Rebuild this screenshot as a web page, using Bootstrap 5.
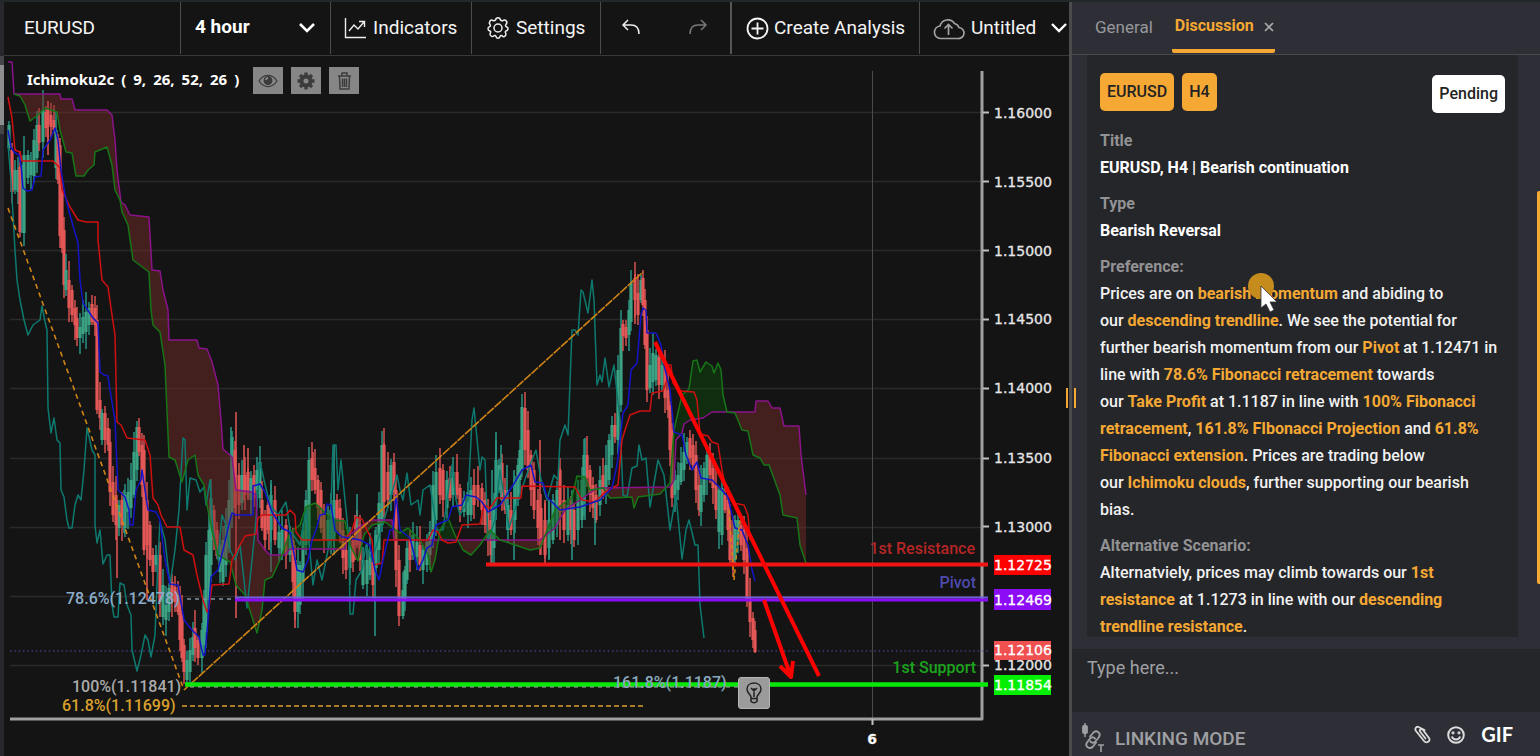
<!DOCTYPE html>
<html lang="en" data-bs-theme="dark">
<head>
<meta charset="utf-8">
<meta name="viewport" content="width=device-width, initial-scale=1">
<title>EURUSD chart</title>
<link href="https://cdn.jsdelivr.net/npm/bootstrap@5.3.0/dist/css/bootstrap.min.css" rel="stylesheet">
<style>
  :root { --ink:#141414; --pane:#2e2f36; --well:#25262a; --gold:#f5a833; }
  body { font-family: Roboto, sans-serif; background: var(--ink); color:#f2f2f2; }
  .app { height: 100vh; border-top: 2px solid #222729; }
  .rail { flex: 0 0 4px; background:#27272d; padding-top: 54px; }
  .rail-thumb { height: 78px; background:#8d8e90; border-top: 9px solid #45464a; border-bottom: 9px solid #45464a; }
  .workspace { background: var(--ink); }
  .toolbar { height: 54px; border-bottom: 1px solid #383838; font-size: 19px; font-weight: 500; }
  .tool { background: none; border: 0; border-right: 1px solid #4c4c4c; color:#f4f4f4; padding: 0; line-height: 24px; white-space: nowrap; display: flex; align-items: center; height: 52px; flex-shrink: 0; }
  .tool svg { flex: none; }
  .t-pair { width: 177px; padding-left: 20px; font-weight: 400; }
  .t-pair input { width: 100%; border: 0; background: none; color: inherit; padding: 0; outline: 0; }
  .t-frame { width: 150px; position: relative; }
  .t-frame select { appearance: none; border: 0; background: none; color: #fff; font-weight: 700; width: 100%; height: 100%; padding: 0 14px 2px; outline: 0; }
  .t-frame svg { position: absolute; right: 14px; pointer-events: none; }
  .t-ind { width: 141px; padding-left: 13px; gap: 6px; }
  .t-set { width: 129px; padding-left: 14px; gap: 6px; }
  .t-undo { width: 65px; border-right: 0; padding-left: 20px; }
  .t-redo { width: 66px; border-right: 2px solid #555; padding-left: 22px; }
  .t-new { width: 188px; padding-left: 14px; gap: 5px; }
  .t-file { padding-left: 12px; gap: 6px; border-right: 0; flex: 1 1 0; }
  .chart-wrap { min-height: 0; }
  .plot { width: 100%; height: 100%; }
  .legend-row { top: 11px; left: 23px; gap: 8px; }
  .legend-name { font: 700 15px "Noto Sans", sans-serif; color:#fff; margin-right: 6px; padding-bottom: 4px; gap: 7px; }
  .chip { width: 30px; height: 27px; padding: 0; border: 0; background:#868686; color:#3c3c3c; display:grid; place-items:center; }
  .idea-btn { left: 68.9%; top: 88.7%; width: 32px; height: 32px; padding: 0; border: 1px solid #b5b5b5; border-radius: 3px; background:#9b9b9b; display:grid; place-items:center; }
  .axis-text { font: 14px "DejaVu Sans", sans-serif; }
  .plot-text { font: 500 16px Roboto, sans-serif; }
  .splitter { flex: 0 0 3px; background:#4b4b4e; }
  .grip { left: -3px; top: 386px; width: 10px; height: 20px; border: solid var(--gold); border-width: 0 2px; }
  .side { flex: 0 0 468px; background: var(--pane); }
  .tabs { height: 54px; border-bottom: 1px solid #47494d; padding-left: 23px; font-size: 17px; }
  .tab-plain { color:#97989b; padding: 13px 0 0; line-height: 24px; }
  .tab-on { color: var(--gold); font-size: 16px; font-weight: 700; margin-left: 19px; padding: 11px 1px 0 3px; line-height: 26px; width: 103px; border-bottom: 4px solid var(--gold); border-radius: 2px; height: 51px; background: none; }
  .tab-on, .tab-plain { border-top: 0; border-left: 0; border-right: 0; }
  .tab-plain { background: none; border-bottom: 0; }
  .feed { min-height: 0; margin-bottom: 12px; padding: 0 22px 0 15px; }
  .post { height: 100%; overflow: hidden; background: var(--well); padding: 18px 13px 0; font-size: 16px; line-height: 27px; font-weight: 500; }
  .tags { margin-bottom: 14px; }
  .tag { height: 38px; line-height: 37px; padding: 0 7px; border-radius: 5px; background: var(--gold); color:#232323; font-weight: 500; }
  .tag-state { background:#fff; margin-top: 2px; }
  .post h2 { font-size: 16px; line-height: 27px; font-weight: 700; color:#929294; margin: 0; }
  .post p { margin: 0 0 9px; }
  .post b { color: var(--gold); font-weight: 700; }
  .feed-thumb { right: 0; top: 136px; width: 3px; height: 393px; background: var(--gold); border-radius: 2px 0 0 2px; }
  .pointer { left: 175px; top: 216px; pointer-events: none; }
  .compose { height: 64px; border: 0; resize: none; background: var(--well); color:#eee; padding: 6px 15px; font-size: 18px; line-height: 26px; outline: 0; display: block; }
  .compose::placeholder { color:#9fa0a3; opacity: 1; }
  .foot { height: 44px; padding: 0 27px 0 9px; }
  .foot button { background: none; border: 0; padding: 0; color:#dcdcdc; }
  .foot .link-mode { color:#9fa0a3; font-size: 19px; font-weight: 500; gap: 10px; padding-top: 10px; }
  .foot .gif { font: 700 20px Lato, sans-serif; color: #fff; }
</style>
</head>
<body>
<div class="app d-flex overflow-hidden">
  <div class="rail"><div class="rail-thumb"></div></div>

  <main class="workspace d-flex flex-column flex-grow-1 overflow-hidden">
    <div class="toolbar d-flex">
      <div class="tool t-pair"><input type="text" value="EURUSD" aria-label="Symbol"></div>
      <div class="tool t-frame">
        <select aria-label="Timeframe"><option>4 hour</option></select>
        <svg width="18" height="12" viewBox="0 0 18 12" fill="none" stroke="#fff" stroke-width="2.6"><path d="M2 2l7 7 7-7"/></svg>
      </div>
      <button class="tool t-ind" type="button">
        <svg width="23" height="22" viewBox="0 0 23 22" fill="none" stroke="#eee" stroke-width="1.4"><path d="M1.5 1v19.5H22M5 14l5-6 4 4 6-7M15 4.500h5.500V10"/></svg>Indicators</button>
      <button class="tool t-set" type="button">
        <svg width="24" height="24" viewBox="0 0 24 24" fill="none" stroke="#eee" stroke-width="1.500" stroke-linejoin="round"><circle cx="12" cy="12" r="4"/><path d="M9.500 4Q10 1.800 12 1.800T14.500 4Q15.500 5.300 17 4.500 19 3.500 20.300 5T20 8.500Q18.800 10 20.500 10.800 22.300 11.500 22 13.200T20 15Q18.700 15.700 19.800 17.300 20.500 19 19 20.200T16 19.700Q14.700 18.800 14 20.500 13.500 22.300 12 22.300T10 20.500Q9.300 18.800 8 19.700 6.500 21 5 20T4.200 17Q5.300 15.700 4 15 2 14.500 2 12.800T3.500 10.800Q5.200 10 4 8.500 2.800 6.500 4 5T7 4.500Q8.500 5.300 9.500 4z"/></svg>Settings</button>
      <button class="tool t-undo" type="button" aria-label="Undo"><svg width="20" height="18" viewBox="0 0 20 18" fill="none" stroke="#eee" stroke-width="1.500"><path d="M7 1L2 6l5 5M2 6h8c5 0 8 3 8 9"/></svg></button>
      <button class="tool t-redo" type="button" aria-label="Redo"><svg width="20" height="18" viewBox="0 0 20 18" fill="none" stroke="#777" stroke-width="1.500"><path d="M13 1l5 5-5 5M18 6h-8c-5 0-8 3-8 9"/></svg></button>
      <button class="tool t-new" type="button">
        <svg width="23" height="23" viewBox="0 0 23 23" fill="none" stroke="#f4f4f4" stroke-width="1.800"><circle cx="11.500" cy="11.500" r="10"/><path d="M11.500 5.500v12M5.500 11.500h12"/></svg>Create Analysis</button>
      <button class="tool t-file" type="button">
        <svg width="33" height="23" viewBox="0 0 33 23" fill="none" stroke="#a2a2a2" stroke-width="1.700"><path d="M8 21.500h18a5.500 5.500 0 0 0 1-11 6.500 6.500 0 0 0-4.500-4A8 8 0 0 0 8 9a6.300 6.300 0 0 0 0 12.500zM16.500 18V7.500M12.500 11.500l4-4 4 4"/></svg>Untitled
        <svg class="ms-2" width="18" height="12" viewBox="0 0 18 12" fill="none" stroke="#fff" stroke-width="2.400"><path d="M2 2l7 7 7-7"/></svg></button>
    </div>

    <div class="chart-wrap position-relative flex-grow-1">
      <svg class="plot d-block" viewBox="4 56 1065 700" preserveAspectRatio="xMinYMin meet" role="img" aria-label="EURUSD 4 hour candles">
        <g stroke="#2a2a2a" stroke-width="1.500"><path d="M10 112.500H982M10 181.500H982M10 250.500H982M10 319.500H982M10 388.500H982M10 458.500H982M10 527.500H982M10 596.500H982M10 665.500H982"/></g>
        <path d="M872.500 71V718" stroke="#4a4a4a"/>
        <path d="M982 71V719H10" fill="none" stroke="#a0a0a0" stroke-width="3" stroke-linejoin="round"/>
        <path d="M872.500 719v6M983 112.500h6M983 181.500h6M983 250.500h6M983 319.500h6M983 388.500h6M983 458.500h6M983 526.500h6M983 665.500h6" stroke="#c0c0c0" stroke-width="2"/>
        <path d="M10 651H988" stroke="#5450b4" stroke-dasharray="1.500 2.800"/>
        <g id="candles"></g>
        <g id="clouds"></g>
        <g id="studies" fill="none" stroke-width="1.500" stroke-linejoin="round"></g>
        <g fill="none" stroke="#cf8415" stroke-width="1.600">
          <path d="M8 208L184 690" stroke-dasharray="5 4"/><path d="M184 690L643 272" stroke-dasharray="9 1"/>
          <path d="M729 510l5 70 6-62" stroke-dasharray="4 3"/>
        </g>
        <path d="M182 706H643" stroke="#d9a02c" stroke-width="1.500" stroke-dasharray="5 3"/>
        <path d="M187 599H240" stroke="#7f92a0" stroke-width="1.500" stroke-dasharray="4 4"/>
        <path d="M486 564.500H988" stroke="#f01414" stroke-width="4"/>
        <path d="M235 597.500H988" stroke="#6c62dc" stroke-width="2"/><path d="M235 600H988" stroke="#8c0cf5" stroke-width="3"/>
        <path d="M185 684.500H988" stroke="#0ae80a" stroke-width="4.500"/>
        <path d="M190 687H740" stroke="#a0b8a0" stroke-width="1" stroke-dasharray="4 4"/>
        <path d="M655 342L819 676" stroke="#fd0000" stroke-width="4"/>
        <path d="M764 600L791 677M780 666l11 11 2-16" fill="none" stroke="#fd0000" stroke-width="4" stroke-linejoin="round"/>
        <g class="plot-text">
          <text x="66" y="604" fill="#8badc8">78.6%(1.12478)</text>
          <text x="72" y="692" fill="#ababab">100%(1.11841)</text>
          <text x="62" y="711" fill="#d9a02c">61.8%(1.11699)</text>
          <text x="613" y="688" fill="#8aa9bd">161.8%(1.1187)</text>
          <text x="975" y="554" fill="#b62626" text-anchor="end">1st Resistance</text>
          <text x="976" y="588" fill="#4e4aad" text-anchor="end">Pivot</text>
          <text x="976" y="673" fill="#1ca31c" text-anchor="end">1st Support</text>
        </g>
        <g class="axis-text" fill="#e6e6e6" stroke="#e6e6e6" stroke-width=".3">
          <text x="994" y="118">1.16000</text><text x="994" y="187">1.15500</text><text x="994" y="256">1.15000</text>
          <text x="994" y="324">1.14500</text><text x="994" y="393">1.14000</text><text x="994" y="463">1.13500</text>
          <text x="994" y="532">1.13000</text><text x="994" y="670">1.12000</text>
          <text x="872" y="744" text-anchor="middle" font-weight="700" fill="#fff">6</text>
        </g>
        <path d="M994 555h57v20h-57z" fill="#fd0000"/><path d="M994 589h57v21h-57z" fill="#8c0cf5"/>
        <path d="M994 641h57v19h-57z" fill="#f05050"/><path d="M994 675h57v20h-57z" fill="#04ef04"/>
        <g class="axis-text" fill="#fff" stroke="#fff" stroke-width=".3"><text x="994" y="570">1.12725</text><text x="994" y="605">1.12469</text><text x="994" y="655">1.12106</text><text x="994" y="690">1.11854</text></g>
      </svg>

      <div class="legend-row position-absolute d-flex align-items-center">
        <div class="legend-name d-flex"><span>Ichimoku2c</span> <span>(</span> <span>9,</span> <span>26,</span> <span>52,</span> <span>26</span> <span>)</span></div>
        <button class="chip" type="button" aria-label="Show or hide"><svg width="20" height="14" viewBox="0 0 20 14" fill="none" stroke="currentColor" stroke-width="1.300"><path d="M1 7c5-7.500 13-7.500 18 0-5 7.500-13 7.500-18 0z"/><circle cx="10" cy="6.500" r="3.800" fill="currentColor"/><path d="M8 6q0-2 2-2" stroke="#999"/></svg></button>
        <button class="chip" type="button" aria-label="Indicator settings"><svg width="18" height="18" viewBox="-9 -9 18 18"><g fill="none" stroke="currentColor"><circle r="4.500" stroke-width="4"/><path d="M0-8.500v3M0 8.500v-3M-8.500 0h3M8.500 0h-3M-6-6l2 2M6 6l-2-2M-6 6l2-2M6-6l-2 2" stroke-width="3.400"/></g></svg></button>
        <button class="chip" type="button" aria-label="Remove indicator"><svg width="15" height="18" viewBox="0 0 15 18" fill="none" stroke="currentColor" stroke-width="1.500"><path d="M1 4h13M5 3.500V1h5v2.500M2.500 4l.5 13h9l.5-13M5.500 6.500v8.500M7.500 6.500v8.500M9.500 6.500v8.500"/></svg></button>
      </div>
      <button class="idea-btn position-absolute" type="button" aria-label="Idea"><svg width="18" height="22" viewBox="0 0 18 22" fill="none" stroke="#222" stroke-width="1.500"><path d="M6 15c0-2-4-3.500-4-8 0-8 14-8 14 0 0 4.500-4 6-4 8v4.500q-3 2.500-6 0zM6 16.500h6M9 15V6M6 6l3 3 3-3"/></svg></button>
    </div>
  </main>

  <div class="splitter position-relative"><div class="grip position-absolute z-1"></div></div>

  <aside class="side d-flex flex-column">
    <div class="tabs d-flex" role="tablist">
      <button class="tab-plain align-self-start" role="tab" type="button">General</button>
      <button class="tab-on text-start d-flex" role="tab" type="button" aria-selected="true">Discussion
        <svg class="ms-auto mt-2" width="10" height="12" viewBox="0 0 10 12" stroke="#a9a9a9" stroke-width="1.700"><path d="M1 2l8 8M9 2l-8 8"/></svg></button>
    </div>
    <div class="feed flex-grow-1 position-relative">
      <article class="post">
        <div class="tags d-flex align-items-start gap-2">
          <span class="tag">EURUSD</span><span class="tag">H4</span><span class="tag tag-state ms-auto">Pending</span>
        </div>
        <h2>Title</h2>
        <p class="fw-bold text-white">EURUSD, H4 | Bearish continuation</p>
        <h2>Type</h2>
        <p class="fw-bold text-white">Bearish Reversal</p>
        <h2>Preference:</h2>
        <p>Prices are on <b>bearish momentum</b> and abiding to our&nbsp;<b>descending trendline</b>. We see the potential for further bearish momentum from our <b>Pivot</b> at 1.12471 in line with <b>78.6% Fibonacci retracement</b> towards our&nbsp;<b>Take&nbsp;Profit</b> at 1.1187 in line with <b>100% Fibonacci retracement</b>, <b>161.8% FIbonacci Projection</b> and <b>61.8% Fibonacci extension</b>. Prices are trading below our&nbsp;<b>Ichimoku clouds</b>, further supporting our bearish bias.</p>
        <h2>Alternative Scenario:</h2>
        <p>Alternatviely, prices may climb towards our <b>1st resistance</b> at 1.1273 in line with our <b>descending trendline resistance</b>.</p>
      </article>
      <div class="feed-thumb position-absolute"></div>
      <svg class="pointer position-absolute" width="32" height="44" viewBox="0 0 32 44"><circle cx="14" cy="15" r="13" fill="#c58c1d"/><path d="M14 15v22l5-4 4 8 4-2-4-8h7z" fill="#fff" stroke="#333" stroke-width=".800"/></svg>
    </div>
    <textarea class="compose w-100" placeholder="Type here..." aria-label="Message"></textarea>
    <div class="foot d-flex align-items-center">
      <button class="link-mode d-flex align-items-center" type="button">
        <svg class="mb-1" width="24" height="30" viewBox="0 0 24 30" fill="none" stroke="currentColor" stroke-width="1.800"><path d="M4 1v14" stroke-width="1.500"/><rect x="2" y="4" width="4" height="7" rx="1" fill="currentColor"/><path d="M8.500 15l4-4.500c3-3 8 .5 5.500 4.500l-3.500 4.500c-2 2-5 1.500-5.500-1"/><path d="M15.500 20l-3.500 4.500c-3.500 3.500-8.500 0-6-4l3-4c2-2 5-1.500 5.500 1"/><path d="M17 23h6M20 23v7" stroke-width="1.600"/></svg>
        LINKING MODE</button>
      <div class="ms-auto d-flex align-items-center gap-3">
        <button type="button" aria-label="Attach"><svg width="17" height="19" viewBox="0 0 17 19" fill="none" stroke="currentColor" stroke-width="1.800" stroke-linecap="round"><path d="M10.500 5L4.500 2C2 1 .5 4 2 6l8 10c2.500 3 7 0 5-3L9 5C7.500 3 5 5 6 6.500l5.500 7"/></svg></button>
        <button type="button" aria-label="Emoji"><svg width="18" height="18" viewBox="0 0 18 18" fill="none" stroke="currentColor" stroke-width="2"><circle cx="9" cy="9" r="7.800"/><path d="M4.800 10.500c1.500 4 7 4 8.400 0"/><circle cx="6" cy="6.800" r=".600"/><circle cx="12" cy="6.800" r=".600"/></svg></button>
        <button class="gif" type="button">GIF</button>
      </div>
    </div>
  </aside>
</div>
<script src="https://cdn.jsdelivr.net/npm/bootstrap@5.3.0/dist/js/bootstrap.bundle.min.js"></script>
<script>
const NS = 'http://www.w3.org/2000/svg';
function path(parent, d, attrs) {
  const p = document.createElementNS(NS, 'path');
  p.setAttribute('d', d);
  for (const k in attrs) p.setAttribute(k, attrs[k]);
  document.getElementById(parent).appendChild(p);
}
// candle bodies: x, top, bottom, u(p) / d(own)
const bars = `9 125 148 u,12 150 192 d,15 170 190 u,18 170 192 u,20 167 232 d,24 155 233 u,28 155 178 u,31 160 175 u,34 140 176 u,37 125 158 u,39 125 143 d,43 110 142 u,46 112 128 d,48 110 125 d,51 115 127 d,54 120 130 d,56 130 168 u,58 138 180 d,60 145 236 d,62 190 248 d,64 230 285 d,66 270 290 u,69 280 308 d,72 290 315 d,75 308 325 d,77 318 338 d,80 327 338 u,83 317 334 u,86 312 332 u,89 308 325 u,92 304 322 d,95 308 325 d,97 320 410 d,100 400 418 d,102 413 440 u,105 413 440 d,108 428 445 d,110 442 492 d,113 482 515 d,116 495 525 d,119 505 528 u,122 500 525 d,125 495 528 u,128 492 512 u,131 480 508 u,134 452 495 u,137 427 470 u,139 427 452 d,142 445 485 d,144 450 550 d,147 500 545 d,150 525 560 d,153 555 572 d,156 555 565 u,160 555 602 d,163 585 617 u,166 605 620 u,169 588 612 u,172 582 600 d,175 587 602 d,178 595 612 d,180 603 640 d,182 615 658 d,184 645 672 d,187 660 680 u,190 650 672 u,193 637 655 u,195 628 648 d,198 640 658 d,202 630 658 u,204 600 645 u,206 555 632 u,209 530 600 u,211 498 565 u,214 510 540 d,217 530 556 d,220 545 572 u,223 540 582 u,226 525 565 u,229 500 548 u,232 437 515 u,235 450 508 d,239 475 505 d,242 475 503 u,245 475 495 d,248 472 490 d,251 478 500 u,254 475 498 d,257 470 490 u,260 462 498 u,262 500 528 d,265 515 540 d,268 505 530 d,271 495 530 u,275 500 540 d,279 532 548 u,282 530 554 u,286 525 555 d,290 535 555 u,293 540 582 d,295 560 612 d,298 565 612 u,300 565 605 u,303 530 582 u,306 500 545 u,309 460 540 u,312 458 480 d,315 468 490 d,318 480 508 d,321 490 528 d,324 515 540 d,328 520 541 u,331 510 540 u,334 500 540 u,337 500 518 d,340 508 535 d,343 530 558 d,346 550 570 d,350 545 568 u,353 540 562 d,357 517 545 d,360 525 560 d,363 560 585 u,367 560 584 u,370 552 575 u,373 562 585 d,376 535 568 u,379 503 550 u,382 445 525 u,384 445 502 d,388 472 500 d,391 465 495 u,394 462 492 d,396 490 570 d,399 560 616 d,403 590 616 u,405 570 600 u,407 548 580 u,410 540 560 d,413 535 555 u,417 542 557 u,420 545 565 d,423 550 570 u,427 542 565 u,430 532 555 u,433 485 540 u,436 472 520 u,440 468 495 d,443 470 500 d,447 480 508 u,450 478 498 d,453 472 495 u,457 472 495 d,460 488 510 d,464 498 512 u,468 492 515 u,471 490 515 u,474 485 505 d,478 485 500 d,482 488 510 d,485 500 525 d,488 510 540 d,491 520 555 d,494 510 548 u,496 460 500 u,499 465 490 u,502 463 500 d,505 490 510 d,508 505 530 u,511 510 530 d,515 480 520 u,518 465 500 u,520 450 480 u,522 407 470 u,525 408 450 d,528 430 470 d,531 455 490 d,534 470 510 d,538 500 528 d,541 508 545 d,545 520 555 d,549 520 548 u,553 500 540 u,557 490 525 u,560 470 512 d,564 500 530 d,568 505 535 u,571 500 530 d,574 510 540 d,578 490 530 u,582 480 520 u,584 455 500 u,587 455 478 d,590 470 495 d,593 485 508 d,596 495 520 d,600 480 505 u,603 475 495 d,606 465 492 u,609 440 480 u,612 425 455 u,615 425 437 d,618 370 440 u,621 328 405 u,623 324 336 d,626 327 338 d,629 310 335 u,631 283 322 u,635 278 300 d,638 293 315 d,641 280 300 u,643 278 305 d,645 300 345 d,647 330 390 d,650 365 388 u,653 353 382 u,656 355 380 u,659 357 385 d,662 365 385 u,665 365 398 d,668 390 410 d,670 405 450 d,672 430 498 d,675 480 495 u,678 475 490 u,681 463 482 u,684 452 470 u,687 442 460 u,690 438 458 d,693 445 465 d,696 455 490 d,699 485 510 d,701 485 512 u,704 468 495 u,707 455 480 u,710 455 475 d,713 468 488 d,716 485 510 d,719 490 532 u,722 488 535 u,725 495 510 d,728 500 530 d,730 520 560 d,733 535 565 d,735 520 560 u,738 520 540 u,741 525 545 d,744 530 560 d,747 548 600 d,750 598 622 d,753 618 640 d,755 630 652 d`
  .split(',').map(s => s.split(' '));
const tint = { u: '#3ba284', d: '#e35757' };
bars.forEach(([x, t, b, k], i) => {
  x = +x; t = +t; b = +b;
  const up = 4 + (i * 37 % 17), down = 3 + (i * 53 % 15);
  const wick = k === 'u' ? '#2a9b8a' : '#e35757';
  path('candles', `M${x} ${t - up}V${b + (i === bars.length - 1 ? 0 : down)}`, { stroke: wick, 'stroke-width': 1.4 });
  path('candles', `M${x} ${t}V${b}`, { stroke: tint[k], 'stroke-width': 3.2 });
});
// long single wicks
path('candles', 'M48 101V155M117 500V578M147 540V600M236 412V618M244 445V500M248 448V500M269 500V550M295 570V628M313 452V480M355 515V560M384 443V470M540 440V555M545 500V563M560 468V540M635 274V324M755 630V653', { stroke: '#e35757', 'stroke-width': 1.5 });
path('candles', 'M22 165V233M124 490V533M231 427V500M271 480V572M334 445V555M375 530V636M357 494V540M492 470V564M496 432V520M501 445V500M507 465V530M514 470V560M549 500V560M572 490V560M585 438V520M595 500V545', { stroke: '#2a9b8a', 'stroke-width': 1.5 });

const spanA = '14,94 20,96 25,105 30,121 38,115 45,108 57,112 60,130 66,152 72,153 76,176 84,176 88,170 94,165 95,152 107,147 112,165 115,190 120,200 122,212 128,225 133,260 149,272 151,310 153,325 160,332 165,365 169,457 175,460 182,482 188,460 195,455 198,475 204,485 207,505 213,535 218,555 230,562 236,585 245,595 257,633 262,610 265,580 272,577 280,560 290,532 300,525 306,507 315,503 328,515 335,520 345,521 350,545 358,561 364,535 372,525 385,522 400,533 408,528 420,540 428,555 431,572 435,560 440,530 448,518 455,535 463,550 471,555 480,545 490,530 500,540 515,545 530,550 540,548 555,510 572,497 577,476 585,477 590,490 603,488 610,498 632,497 634,508 638,497 660,494 670,483 674,430 682,395 689,389 693,361 697,360 700,372 706,362 712,366 714,373 718,363 721,370 723,395 727,412 735,413 742,430 748,431 753,455 760,458 764,465 769,465 780,495 783,515 797,518 800,545 806,563';
const spanB = '8,62 12,62 14,94 60,94 61,99 72,99 75,110 107,110 112,115 115,140 117,170 121,202 125,205 130,215 149,217 152,270 160,271 163,290 168,310 169,340 197,340 199,348 207,349 212,362 218,385 221,420 223,449 232,457 236,490 252,492 256,495 258,540 265,550 270,555 285,555 290,549 345,549 347,537 362,525 372,520 392,520 394,540 540,540 555,528 565,510 580,500 597,488 670,487 674,480 676,440 682,433 684,424 690,420 703,418 712,412 755,412 756,401 768,401 772,408 780,408 784,426 799,426 801,455 806,495';
const parse = s => s.split(' ').map(p => p.split(',').map(Number));
function at(pts, x) {
  for (let i = 1; i < pts.length; i++) if (x <= pts[i][0]) {
    const [a, b] = pts[i - 1], [c, d] = pts[i];
    return b + (d - b) * (x - a) / (c - a);
  }
  return pts[pts.length - 1][1];
}
const leadA = parse(spanA), leadB = parse(spanB);
// split the cloud wherever the leading spans cross
let edgeA = [], edgeB = [], rising = null;
function flush() {
  if (edgeA.length > 1) path('clouds', 'M' + edgeA.join('L') + 'L' + edgeB.reverse().join('L') + 'Z',
    { fill: rising ? '#0c500c' : '#782d2a', 'fill-opacity': rising ? .42 : .48 });
  edgeA = []; edgeB = [];
}
for (let x = 14; x <= 806; x++) {
  const a = at(leadA, x), b = at(leadB, x), up = a < b;
  if (up !== rising) { flush(); rising = up; }
  edgeA.push([x, a.toFixed(1)]); edgeB.push([x, b.toFixed(1)]);
}
flush();
const line = (s, c) => path('studies', 'M' + s.split(' ').join('L'), { stroke: c });
line('8,145 11,180 13,215 15,250 17,280 20,300 24,320 28,335 33,325 40,320 42,306 45,322 47,330 48,408 51,433 54,418 57,440 60,443 61,490 64,497 67,520 69,528 72,528 75,505 78,495 81,500 84,470 87,428 92,450 95,455 95,525 97,543 100,530 103,564 107,555 110,555 112,605 114,617 118,617 120,583 124,585 127,605 131,615 132,650 137,671 141,655 145,635 148,640 151,657 155,635 158,560 160,522 165,540 170,585 175,550 179,510 183,438 185,440 187,510 190,478 196,480 200,492 204,487 206,505 210,480 213,530 218,560 222,515 226,525 230,550 235,560 240,545 244,580 247,608 252,560 256,520 260,462 264,480 270,505 278,515 286,502 290,530 300,545 306,510 313,585 317,560 322,580 330,540 333,445 336,445 338,490 341,460 346,510 349,540 350,614 353,614 356,580 362,570 366,545 372,560 378,540 390,500 397,475 400,490 403,500 407,473 411,505 418,500 420,515 423,490 430,485 437,530 443,530 447,500 452,465 456,500 460,515 468,500 472,420 474,408 480,470 482,457 485,460 488,540 495,520 500,470 509,528 518,500 530,465 536,450 541,480 547,500 554,475 558,480 560,440 565,425 568,435 572,330 575,330 578,335 581,290 583,292 588,313 592,280 594,300 597,385 600,375 602,382 605,358 609,387 614,365 620,420 623,495 627,497 632,468 637,466 639,445 642,460 646,458 650,507 658,460 664,475 670,530 676,495 682,559 686,530 689,520 695,545 698,545 700,605 704,638', '#0d7a70');
line(spanB, '#8a128a');
line(spanA, '#177617');
line('8,97 12,118 15,150 20,152 22,161 53,161 60,168 62,190 70,207 75,215 78,220 86,222 98,222 98,240 102,280 108,287 112,315 115,335 117,422 121,425 127,438 145,440 150,455 153,498 158,505 161,515 167,527 180,527 184,550 193,555 197,575 203,600 207,612 209,608 212,585 229,584 232,560 240,545 245,536 256,534 258,518 262,515 286,515 290,510 295,515 296,532 302,540 345,540 347,537 352,530 356,517 362,519 366,528 372,540 374,565 382,563 384,540 428,540 433,530 438,532 442,540 448,543 456,542 462,525 480,524 484,505 490,508 497,498 521,498 522,486 575,487 582,500 595,502 605,492 618,485 622,440 625,430 630,415 640,411 650,411 652,393 663,391 667,380 667,365 671,365 673,383 680,391 694,392 697,400 700,434 708,436 712,442 718,444 722,470 726,490 733,503 744,505 748,515 750,540', '#d01010');
line('8,130 11,147 14,152 19,155 21,165 23,188 27,191 32,190 35,177 41,176 43,150 50,140 55,128 58,140 61,170 65,195 70,215 78,243 80,280 83,303 93,318 98,323 100,372 104,375 108,376 110,390 115,420 118,490 125,497 129,510 130,525 133,525 136,490 141,480 142,470 145,490 148,510 156,512 160,520 165,560 170,584 178,585 184,620 192,630 199,637 203,655 205,655 208,620 211,577 218,570 223,550 230,520 232,513 236,515 253,515 253,486 260,484 265,492 272,512 282,528 290,532 297,570 303,572 308,560 312,540 316,530 320,515 325,514 327,504 331,505 335,530 342,537 350,538 360,540 370,545 375,570 379,580 383,560 390,530 393,530 396,495 400,530 410,538 418,570 423,560 427,548 432,545 436,525 448,520 452,507 462,505 466,495 476,497 482,502 488,512 500,505 510,490 515,482 522,470 531,465 535,482 543,483 547,497 560,510 580,507 600,500 612,488 617,465 620,440 623,413 628,405 631,370 637,363 641,315 643,308 646,310 647,333 656,333 661,345 664,365 670,390 674,432 682,435 686,455 692,470 697,462 701,478 712,480 720,488 728,497 735,528 742,530 745,538 748,545 752,570 755,581', '#1414c8');
</script>
</body>
</html>
